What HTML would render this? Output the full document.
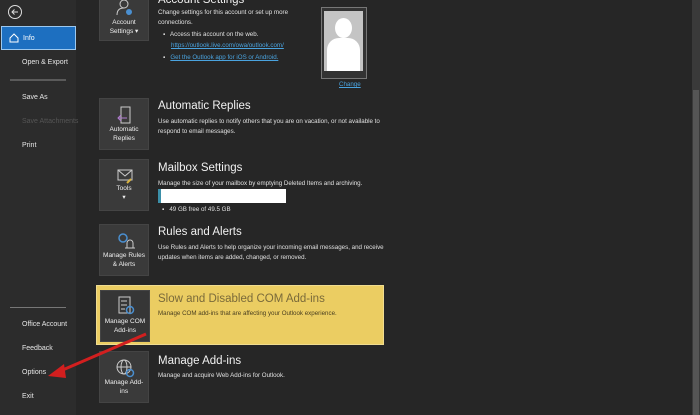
<!DOCTYPE html>
<html><head><style>
body{margin:0;width:700px;height:415px;overflow:hidden;background:#262626;font-family:"Liberation Sans",sans-serif;position:relative;color:#ddd}
.sb{position:absolute;left:0;top:0;width:76px;height:415px;background:#2c2c2c}
.n{position:absolute;left:22px;font-size:7px;color:#e6e6e6}
.tile{position:absolute;left:99px;width:50px;height:52px;background:#3a3a3a;border:1px solid #444;box-sizing:border-box;font-size:6.5px;color:#eee;text-align:center}
.tile .l{position:absolute;left:0;right:0;bottom:6px;line-height:9px}
.tile svg{position:absolute;left:15px;top:6px}
.h{position:absolute;left:158px;font-size:11.5px;color:#f0f0f0}
.d{position:absolute;left:158px;font-size:6.2px;color:#e0e0e0;line-height:9.5px}
a{color:#4aa3df}
</style></head><body>
<div class="sb"></div>
<svg style="position:absolute;left:7px;top:4px" width="16" height="16"><circle cx="8" cy="8" r="6.5" fill="none" stroke="#ddd" stroke-width="1"/><path d="M11 8H5M7.5 5.5L5 8l2.5 2.5" fill="none" stroke="#ddd"/></svg>
<div style="position:absolute;left:1px;top:26px;width:75px;height:24px;background:#1d6fc0;border:1px solid #9cc8ef;box-sizing:border-box"></div>
<svg style="position:absolute;left:9px;top:33px" width="10" height="10"><path d="M1 5L5 1L9 5V9H1Z" fill="none" stroke="#fff"/></svg>
<div class="n" style="top:35px;left:23px;color:#fff">Info</div>
<div class="n" style="top:59px">Open &amp; Export</div>
<div style="position:absolute;left:10px;top:79px;width:56px;height:2px;background:#5a5a5a"></div>
<div class="n" style="top:94px">Save As</div>
<div class="n" style="top:118px;color:#555">Save Attachments</div>
<div class="n" style="top:142px">Print</div>
<div style="position:absolute;left:10px;top:307px;width:56px;height:1px;background:#777"></div>
<div class="n" style="top:321px">Office Account</div>
<div class="n" style="top:345px">Feedback</div>
<div class="n" style="top:369px">Options</div>
<div class="n" style="top:393px">Exit</div>

<div class="tile" style="top:-10px;height:51px"><svg width="20" height="20" style="top:6px"><circle cx="9" cy="7" r="4" fill="none" stroke="#ccc"/><path d="M2 18c0-5 3-7 7-7" fill="none" stroke="#ccc"/><circle cx="14" cy="15" r="3" fill="#4a8fd0"/></svg><div class="l" style="bottom:4px">Account<br>Settings ▾</div></div>
<div class="h" style="top:-6px">Account Settings</div>
<div class="d" style="top:8px">Change settings for this account or set up more<br>connections.</div>
<div class="d" style="top:30px;left:163px">▪&nbsp;&nbsp; Access this account on the web.</div>
<div class="d" style="top:41px;left:171px"><a><u>https://outlook.live.com/owa/outlook.com/</u></a></div>
<div class="d" style="top:53px;left:163px">▪&nbsp;&nbsp; <a><u>Get the Outlook app for iOS or Android.</u></a></div>
<div style="position:absolute;left:321px;top:7px;width:44px;height:70px;border:1px solid #777;background:#333"></div>
<div style="position:absolute;left:324px;top:11px;width:39px;height:60px;background:#c4c4c4;overflow:hidden"><div style="position:absolute;left:11px;top:7px;width:17px;height:20px;border-radius:50%;background:#fff"></div><div style="position:absolute;left:3px;top:27px;width:33px;height:40px;border-radius:12px 12px 0 0;background:#fff"></div></div>
<div class="d" style="top:80px;left:339px"><a><u>Change</u></a></div>

<div class="tile" style="top:98px"><svg width="20" height="22"><rect x="6" y="2" width="9" height="16" fill="none" stroke="#ccc"/><path d="M12 13H3M6 10l-3 3 3 3" fill="none" stroke="#b07cd0"/></svg><div class="l">Automatic<br>Replies</div></div>
<div class="h" style="top:100px">Automatic Replies</div>
<div class="d" style="top:117px">Use automatic replies to notify others that you are on vacation, or not available to<br>respond to email messages.</div>

<div class="tile" style="top:159px"><svg width="20" height="20" style="top:7px"><rect x="3" y="3" width="14" height="10" fill="none" stroke="#ccc"/><path d="M3 3l7 6 7-6" fill="none" stroke="#ccc"/><path d="M12 16l4-4" stroke="#d9b340" stroke-width="2"/></svg><div class="l" style="bottom:8px">Tools<br>▾</div></div>
<div class="h" style="top:162px">Mailbox Settings</div>
<div class="d" style="top:179px">Manage the size of your mailbox by emptying Deleted Items and archiving.</div>
<div style="position:absolute;left:158px;top:189px;width:128px;height:14px;background:#fff"><div style="width:3px;height:14px;background:#3b8fa8"></div></div>
<div class="d" style="top:205px;left:162px">▪&nbsp;&nbsp; 49 GB free of 49.5 GB</div>

<div class="tile" style="top:224px"><svg width="22" height="20"><circle cx="8" cy="7" r="4" fill="none" stroke="#4a8fd0" stroke-width="1.5"/><path d="M12 17v-5a3 3 0 0 1 6 0v5h2H10" fill="none" stroke="#ccc"/></svg><div class="l">Manage Rules<br>&amp; Alerts</div></div>
<div class="h" style="top:226px">Rules and Alerts</div>
<div class="d" style="top:243px">Use Rules and Alerts to help organize your incoming email messages, and receive<br>updates when items are added, changed, or removed.</div>

<div style="position:absolute;left:96px;top:285px;width:288px;height:60px;background:#ebcd62;border:1px solid #f0dc90;box-sizing:border-box"></div>
<div class="tile" style="top:290px;left:100px;background:#363636"><svg width="20" height="22" style="top:4px"><rect x="3" y="2" width="11" height="16" fill="none" stroke="#ccc"/><path d="M5 6h6M5 10h6M5 14h4" stroke="#ccc"/><circle cx="14" cy="15" r="3.5" fill="none" stroke="#4a8fd0" stroke-width="1.5"/></svg><div class="l">Manage COM<br>Add-ins</div></div>
<div class="h" style="top:293px;color:#7a6a3a">Slow and Disabled COM Add-ins</div>
<div class="d" style="top:309px;color:#4a3f20">Manage COM add-ins that are affecting your Outlook experience.</div>

<div class="tile" style="top:351px"><svg width="22" height="22" style="top:6px"><circle cx="9" cy="9" r="7" fill="none" stroke="#ccc"/><ellipse cx="9" cy="9" rx="3" ry="7" fill="none" stroke="#ccc"/><path d="M2 9h14" stroke="#ccc"/><circle cx="15" cy="15" r="3.5" fill="none" stroke="#4a8fd0" stroke-width="1.5"/></svg><div class="l">Manage Add-<br>ins</div></div>
<div class="h" style="top:355px">Manage Add-ins</div>
<div class="d" style="top:371px">Manage and acquire Web Add-ins for Outlook.</div>

<svg style="position:absolute;left:0;top:0" width="700" height="415"><path d="M146 334L58 372" stroke="#d21f1f" stroke-width="3"/><path d="M48 376L64 364L66 378Z" fill="#d21f1f"/></svg>
<div style="position:absolute;left:692px;top:0;width:8px;height:415px;background:#3a3a3a"></div>
<div style="position:absolute;left:693px;top:90px;width:6px;height:325px;background:#555"></div>
</body></html>
